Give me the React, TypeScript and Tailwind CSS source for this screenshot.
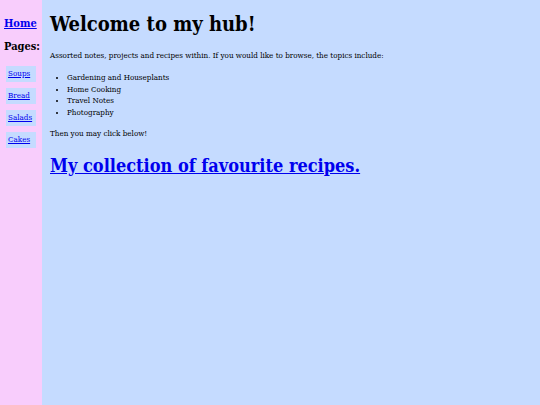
import React from 'react';

const links = ['Soups', 'Bread', 'Salads', 'Cakes'];
const topics = ['Gardening and Houseplants', 'Home Cooking', 'Travel Notes', 'Photography'];

export default function App() {
  return (
    <div className="flex h-[405px] w-[540px] font-['DejaVu_Serif_Condensed','DejaVu_Serif',serif] font-stretch-condensed text-black">
      {/* sidebar */}
      <div className="w-[42px] shrink-0 bg-[#f8cdfc] pl-[4px] pt-[17px]">
        <a href="#" className="block text-[11px] leading-[14px] font-bold text-[#0000ee] underline">Home</a>
        <h3 className="mt-[9px] text-[11px] leading-[14px] font-bold">Pages:</h3>
        <div className="mt-[12px] flex flex-col gap-[6px] pl-[2px] pr-[6px]">
          {links.map(l => (
            <div key={l} className="flex h-[16px] items-center bg-[#c5dbff] px-[2px]">
              <a href="#" className="text-[8px] leading-[10px] text-[#0000ee] underline">{l}</a>
            </div>
          ))}
        </div>
      </div>

      {/* main */}
      <div className="flex-1 bg-[#c5dbff] pl-[8px] pt-[12px]">
        <h1 className="text-[20px] font-bold leading-[24px]">Welcome to my hub!</h1>
        <p className="mt-[14px] text-[8px]">Assorted notes, projects and recipes within. If you would like to browse, the topics include:</p>
        <ul className="mt-[10px] list-disc pl-[17px] text-[8px] leading-[11.5px]">
          {topics.map(t => <li key={t}>{t}</li>)}
        </ul>
        <p className="mt-[10px] text-[8px]">Then you may click below!</p>
        <a href="#" className="mt-[12px] block text-[18px] font-bold text-[#0000ee] underline">My collection of favourite recipes.</a>
      </div>
    </div>
  );
}
